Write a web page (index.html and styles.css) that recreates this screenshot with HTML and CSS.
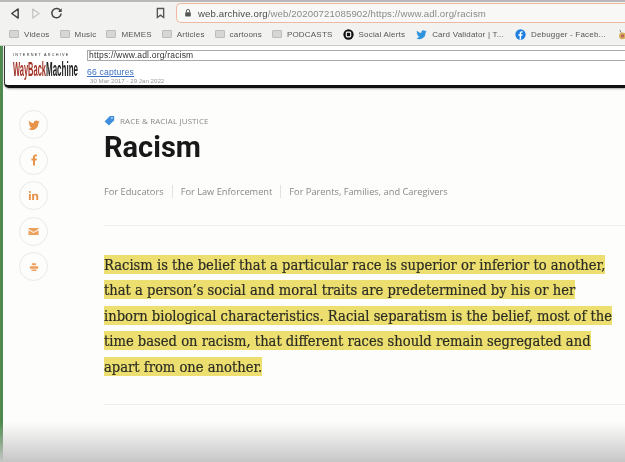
FILE: index.html
```html
<!DOCTYPE html>
<html lang="en">
<head>
<meta charset="utf-8">
<title>Racism</title>
<link rel="stylesheet" href="styles.css">
</head>
<body>
<div class="screen">
  <header class="chrome">
    <div class="navrow">
      <div class="navbtns">
        <svg class="nav-ico" viewBox="0 0 12 14"><path d="M10 2 3 7l7 5z" fill="none" stroke="#444" stroke-width="1.6" stroke-linejoin="round"/></svg>
        <svg class="nav-ico" viewBox="0 0 12 14"><path d="M3 2l7 5-7 5z" fill="none" stroke="#c4c4c4" stroke-width="1.3" stroke-linejoin="round"/></svg>
        <svg class="nav-ico reload" viewBox="0 0 14 14"><path d="M11.4 4.2A5 5 0 1 0 12 7" fill="none" stroke="#444" stroke-width="1.6"/><path d="M12.6 1.4v4h-4z" fill="#444"/></svg>
      </div>
      <svg class="bookmark" viewBox="0 0 10 12"><path d="M1.5 1h7v10L5 8.4 1.5 11z" fill="none" stroke="#555" stroke-width="1.5"/></svg>
      <div class="urlbar">
        <svg class="lock" viewBox="0 0 10 12"><path d="M3 5V3.5a2 2 0 0 1 4 0V5" fill="none" stroke="#555" stroke-width="1.2"/><rect x="1.5" y="5" width="7" height="5.5" rx="1" fill="#555"/></svg>
        <span class="url"><b>web.archive.org</b>/web/20200721085902/https://www.adl.org/racism</span>
      </div>
    </div>
    <nav class="bookmarks">
      <span class="bm"><i class="folder"></i>Videos</span>
      <span class="bm"><i class="folder"></i>Music</span>
      <span class="bm"><i class="folder"></i>MEMES</span>
      <span class="bm"><i class="folder"></i>Articles</span>
      <span class="bm"><i class="folder"></i>cartoons</span>
      <span class="bm"><i class="folder"></i>PODCASTS</span>
      <span class="bm"><svg class="bm-ico" viewBox="0 0 12 12"><circle cx="6" cy="6" r="5.600" fill="#111"/><rect x="3.600" y="3.400" width="4.800" height="5.200" rx="1" fill="none" stroke="#fff" stroke-width="1.200"/></svg>Social Alerts</span>
      <span class="bm"><svg class="bm-ico" viewBox="0 0 24 24"><path fill="#2f94dc" d="M23 5c-.8.4-1.700.6-2.600.7.900-.6 1.600-1.400 2-2.500-.9.5-1.800.9-2.900 1.100A4.600 4.600 0 0 0 11.700 8.500C7.900 8.300 4.500 6.500 2.200 3.700 1 5.800 1.600 8.500 3.600 9.800c-.7 0-1.400-.2-2-.6 0 2.200 1.600 4.100 3.700 4.600-.7.2-1.400.2-2.100.1.600 1.900 2.300 3.200 4.300 3.200A9.300 9.300 0 0 1 .7 20a13 13 0 0 0 20-11.500c.9-.7 1.700-1.500 2.300-3.500z"/></svg>Card Validator | T...</span>
      <span class="bm"><svg class="bm-ico" viewBox="0 0 12 12"><circle cx="6" cy="6" r="5.600" fill="#1f7fe0"/><path d="M6.700 11.500V7.300h1.400l.2-1.600H6.700v-1c0-.5.200-.8.800-.8h.9V2.500c-.3 0-.8-.1-1.200-.1-1.200 0-2.100.8-2.100 2.100v1.200H3.700v1.600h1.400v4.200z" fill="#fff"/></svg>Debugger - Faceb...</span>
      <span class="bm"><svg class="bm-ico" viewBox="0 0 12 12"><circle cx="6" cy="7.500" r="3.800" fill="#d9b05a"/><circle cx="6" cy="7.500" r="1.800" fill="#b5655a"/><path d="M3 1l1.500 3" stroke="#777" fill="none"/></svg></span>
    </nav>
  </header>

  <div class="site">
    <div class="wayback">
      <div class="wb-logo">
        <div class="wb-ia">INTERNET ARCHIVE</div>
        <div class="wb-mark"><span class="wb-way">WayBack</span><span class="wb-mach">Machine</span></div>
      </div>
      <div class="wb-main">
        <div class="wb-input">https://www.adl.org/racism</div>
        <a class="wb-caps">66 captures</a>
        <div class="wb-dates">30 Mar 2017 - 29 Jan 2022</div>
      </div>
    </div>

    <main class="page">
      <aside class="share">
        <a class="share-btn"><svg class="ico-tw" viewBox="0 0 24 24"><path fill="#e8934a" d="M23 5c-.8.4-1.700.6-2.600.7.900-.6 1.600-1.400 2-2.500-.9.5-1.800.9-2.900 1.100A4.600 4.600 0 0 0 11.700 8.500C7.900 8.300 4.500 6.500 2.200 3.700 1 5.800 1.600 8.500 3.600 9.800c-.7 0-1.400-.2-2-.6 0 2.200 1.600 4.100 3.700 4.600-.7.2-1.400.2-2.100.1.600 1.900 2.300 3.200 4.300 3.200A9.300 9.300 0 0 1 .7 20a13 13 0 0 0 20-11.500c.9-.7 1.700-1.500 2.300-3.500z"/></svg></a>
        <a class="share-btn"><svg class="ico-f" viewBox="0 0 24 24"><path fill="#e8934a" d="M14 23V13h3.300l.5-4H14V6.600c0-1.100.4-1.900 2-1.900h2V1.200C17.500 1.100 16.400 1 15.200 1 12.300 1 10 2.800 10 6.100V9H6.800v4H10v10z"/></svg></a>
        <a class="share-btn"><svg viewBox="0 0 24 24"><path fill="#e8934a" d="M2 8.500h4.200V22H2zM4.100 2a2.400 2.400 0 1 1 0 4.800 2.400 2.400 0 0 1 0-4.800zM9 8.500h4v1.900c.7-1.200 2.200-2.200 4.300-2.200 4.300 0 5 2.800 5 6.500V22h-4.200v-6.600c0-1.700-.1-3.700-2.200-3.700s-2.600 1.700-2.600 3.600V22H9z"/></svg></a>
        <a class="share-btn"><svg class="ico-m" viewBox="0 0 24 24"><path fill="#eba05c" d="M1 4.500h22v2.300L12 13 1 6.800zM1 9.200l11 6.200 11-6.200v10.300H1z"/></svg></a>
        <a class="share-btn"><svg class="ico-p" viewBox="0 0 24 24"><path fill="#eba05c" d="M7 3h10v5H7zM2 10h20v6H2zM6 18h12v3.500H6z"/></svg></a>
      </aside>
      <article class="article">
        <div class="tagline">
          <svg class="tag" viewBox="0 0 12 12"><path fill="#3f8fdc" d="M.6 7 6.400 1.200 11 1l.2 4.600L5.400 11.400z"/><circle cx="8.700" cy="3.300" r=".9" fill="#fff"/></svg>
          <span>RACE &amp; RACIAL JUSTICE</span>
        </div>
        <h1 class="title">Racism</h1>
        <ul class="audience">
          <li>For Educators</li>
          <li>For Law Enforcement</li>
          <li>For Parents, Families, and Caregivers</li>
        </ul>
        <hr class="rule rule-top">
        <p class="lede"><mark>Racism is the belief that a particular race is superior or inferior to another,</mark><br><mark>that a person’s social and moral traits are predetermined by his or her</mark><br><mark>inborn biological characteristics. Racial separatism is the belief, most of the</mark><br><mark>time based on racism, that different races should remain segregated and</mark><br><mark>apart from one another.</mark></p>
        <hr class="rule rule-bottom">
      </article>
    </main>
  </div>
  <div class="fade"></div>
</div>
</body>
</html>
```
FILE: styles.css
```css
* { box-sizing: border-box; }
html, body { margin: 0; height: 100%; overflow: hidden; background: #fff; }
.screen {
  width: 625px; height: 462px; display: flex; flex-direction: column;
  font-family: "Liberation Sans", Arial, sans-serif; background: #fdfdfc;
  filter: blur(0.45px); position: relative; overflow: hidden;
}
.chrome { height: 46px; background: #f2f2f1; border-top: 2px solid #b9b9b9; border-bottom: 1px solid #cfcfcf; flex: none; }
.navrow { height: 22px; display: flex; align-items: center; padding-left: 9px; }
.navbtns { display: flex; gap: 10px; align-items: center; width: 147px; }
.nav-ico { width: 11px; height: 13px; }
.reload { width: 13px; margin-left: -1px; }
.bookmark { width: 9px; height: 12px; }
.urlbar {
  margin-left: 11px; height: 20px; flex: 1; display: flex; align-items: center; padding-left: 7px;
  border: 1px solid #eeb9a0; border-right: 0; border-radius: 5px 0 0 5px; background: #f8f8f7;
}
.lock { width: 8px; height: 10px; margin-right: 6px; }
.url { font-size: 9.600px; color: #8a8a8a; letter-spacing: .13px; white-space: nowrap; }
.url b { font-weight: 400; color: #4b4b4b; }
.bookmarks { display: flex; height: 20px; align-items: center; padding-left: 9px; font-size: 8px; color: #555; letter-spacing: .2px; white-space: nowrap; }
.bm { display: flex; align-items: center; gap: 5px; margin-right: 10px; }
.folder { display: block; width: 10px; height: 8px; background: #d6d6d4; border: 1px solid #bdbdbb; border-radius: 1px; }
.bm-ico { width: 11px; height: 11px; }
.bm:nth-child(n+7) { margin-right: 11px; }

.site { flex: 1; min-height: 0; display: flex; flex-direction: column; border-left: 3px solid #4f8a4f; }
.wayback {
  height: 42px; flex: none; margin-left: 1px; display: flex; background: #fff;
  border-left: 1px solid #333; border-bottom: 3px solid #111; border-radius: 0 0 0 5px;
  box-shadow: 0 1px 2px #aaa;
}
.wb-logo { width: 82px; padding: 7px 0 0 8px; }
.wb-ia { font-size: 3.800px; line-height: 4px; letter-spacing: 1.250px; color: #333; white-space: nowrap; }
.wb-mark { display: flex; height: 18px; margin-top: 3px; width: 65px; font-weight: 700; font-size: 20.500px; line-height: 18px; }
.wb-way, .wb-mach { display: block; flex: none; transform-origin: 0 0; white-space: nowrap; }
.wb-way { color: #a03226; width: 33px; transform: scaleX(.365); }
.wb-mach { color: #222; width: 32px; transform: scaleX(.39); }
.wb-main { flex: 1; padding-top: 4px; }
.wb-input { height: 11px; border: 1px solid #aaa; border-right: 0; font-size: 8.500px; line-height: 9px; padding-left: 1px; color: #333; letter-spacing: .2px; }
.wb-caps { display: block; margin-top: 6px; font-size: 8.600px; line-height: 10px; color: #3b6fc4; text-decoration: underline; letter-spacing: .2px; }
.wb-dates { font-size: 6.200px; line-height: 8px; color: #999; margin-left: 3px; }

.page { flex: 1; display: flex; min-height: 0; }
.share { width: 101px; flex: none; padding: 22px 0 0 16px; display: flex; flex-direction: column; gap: 6.500px; }
.share-btn { width: 29px; height: 29px; border: 1px solid #e9e9e8; border-radius: 50%; display: flex; align-items: center; justify-content: center; }
.share-btn svg { width: 11px; height: 11px; }
.share-btn .ico-tw { width: 12px; height: 12px; }
.share-btn .ico-f { width: 12px; height: 12px; }
.share-btn .ico-p { width: 10px; height: 10px; }
.article { width: 521px; padding-top: 26px; flex: none; }
.tagline { display: flex; align-items: center; gap: 5px; height: 12px; font-family: "Open Sans", sans-serif; font-size: 8px; color: #8a8a8a; letter-spacing: .1px; }
.tag { width: 11px; height: 11px; }
.title { margin: 3px 0 0; font-family: Roboto, sans-serif; font-weight: 700; font-size: 29px; line-height: 36px; color: #181818; }
.audience { list-style: none; margin: 20px 0 0; padding: 0; display: flex; font-family: "Open Sans", sans-serif; font-size: 9.250px; line-height: 13px; color: #888; }
.audience li { padding-right: 8px; margin-right: 8px; border-right: 1px solid #e2e2e2; white-space: nowrap; }
.audience li:last-child { border: 0; }
.rule { border: 0; margin: 0; height: 1px; background: #efefee; }
.rule-top { margin-top: 27px; }
.lede { margin: 26px 0 0; font-family: "DejaVu Serif Condensed", "DejaVu Serif", serif; font-size: 14.600px; line-height: 25.400px; color: #2c2c24; white-space: nowrap; -webkit-text-stroke: .2px #2c2c24; }
.lede mark { background: #ecdf70; color: inherit; padding: 1px 0; }
.rule-bottom { margin-top: 25px; }
.fade { position: absolute; left: 0; right: 0; bottom: 0; height: 40px; background: linear-gradient(#fefefd00, #c6c6c6); pointer-events: none; }
```
